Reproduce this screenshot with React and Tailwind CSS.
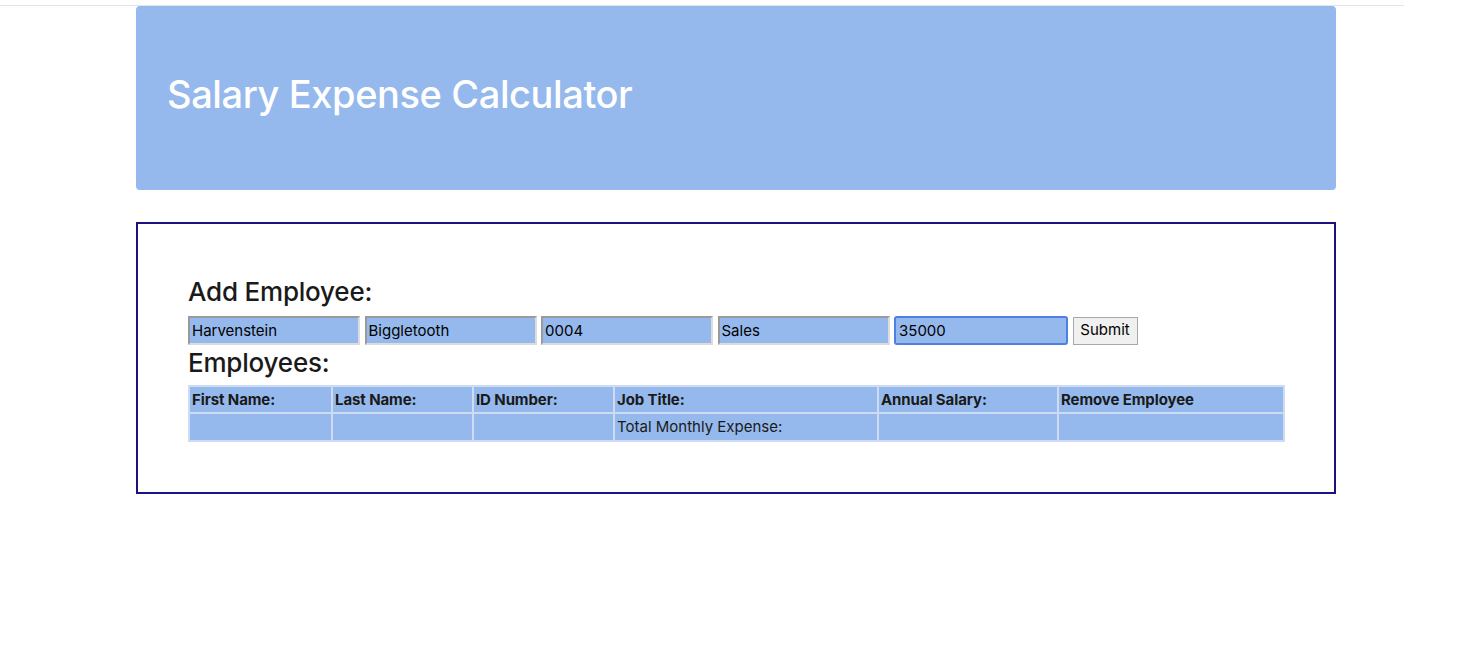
import { useState } from 'react';

const font = { fontFamily: 'Inter, "Liberation Sans", sans-serif' };

export default function App() {
    const [form, setForm] = useState({
        first: 'Harvenstein',
        last: 'Biggletooth',
        id: '0004',
        title: 'Sales',
        salary: '35000',
    });

    const fields = ['first', 'last', 'id', 'title'];
    const headers = ['First Name:', 'Last Name:', 'ID Number:', 'Job Title:', 'Annual Salary:', 'Remove Employee'];
    const widths = ['w-[143px]', 'w-[141px]', 'w-[141px]', 'w-[264px]', 'w-[180px]', 'w-[226px]'];

    return (
        <div className="min-h-[651px] bg-white text-[#1a1a1a]" style={font}>
            <div className="h-[6px] w-[1404px] border-b border-[#e4e4e4]" />

            {/* Header */}
            <div className="ml-[136px] w-[1200px] h-[184px] rounded-[4px] bg-[#95b9ec] flex items-center pl-[31px]">
                <h1 className="text-[38px] font-medium text-white leading-none tracking-[-0.4px] mt-[-8px]">Salary Expense Calculator</h1>
            </div>

            {/* Main */}
            <div className="ml-[136px] mt-[32px] w-[1200px] h-[272px] border-2 border-[#1b1180] pl-[50px] pt-[52px]">
                <h2 className="text-[26px] font-medium leading-[32px] tracking-[-0.2px]">Add Employee:</h2>
                <div className="flex items-center gap-[4.5px] mt-[8px] h-[29px]">
                    {fields.map((f) => (
                        <input
                            key={f}
                            value={form[f]}
                            onChange={(e) => setForm({ ...form, [f]: e.target.value })}
                            className="w-[172px] h-[29px] bg-[#95b9ec] border-2 border-t-[#9a9a9a] border-l-[#9a9a9a] border-r-[#dcdcdc] border-b-[#dcdcdc] px-[2px] text-[15px] text-black outline-none"
                        />
                    ))}
                    <input
                        value={form.salary}
                        onChange={(e) => setForm({ ...form, salary: e.target.value })}
                        className="w-[174px] h-[29px] bg-[#95b9ec] border-2 border-[#4f7fe0] rounded-[3px] px-[3px] text-[15px] text-black outline-none"
                    />
                    <button className="h-[28px] w-[65px] bg-[#f0f0f0] border border-[#a8a8a8] text-[15px] text-black">Submit</button>
                </div>
                <h2 className="text-[26px] font-medium leading-[32px] tracking-[-0.2px] mt-[2px]">Employees:</h2>
                <table className="mt-[6px] border-collapse bg-[#95b9ec] text-[15px] text-left">
                    <thead>
                        <tr>
                            {headers.map((h, i) => (
                                <th key={h} className={`${widths[i]} h-[27px] px-[2px] pt-[2px] border-2 border-[#cddcf3] font-bold tracking-[-0.1px]`}>{h}</th>
                            ))}
                        </tr>
                    </thead>
                    <tbody>
                        <tr>
                            {headers.map((h, i) => (
                                <td key={h} className="h-[28px] px-[2px] pt-[1px] border-2 border-[#cddcf3]">
                                    {i === 3 ? 'Total Monthly Expense:' : ''}
                                </td>
                            ))}
                        </tr>
                    </tbody>
                </table>
            </div>
        </div>
    );
}
